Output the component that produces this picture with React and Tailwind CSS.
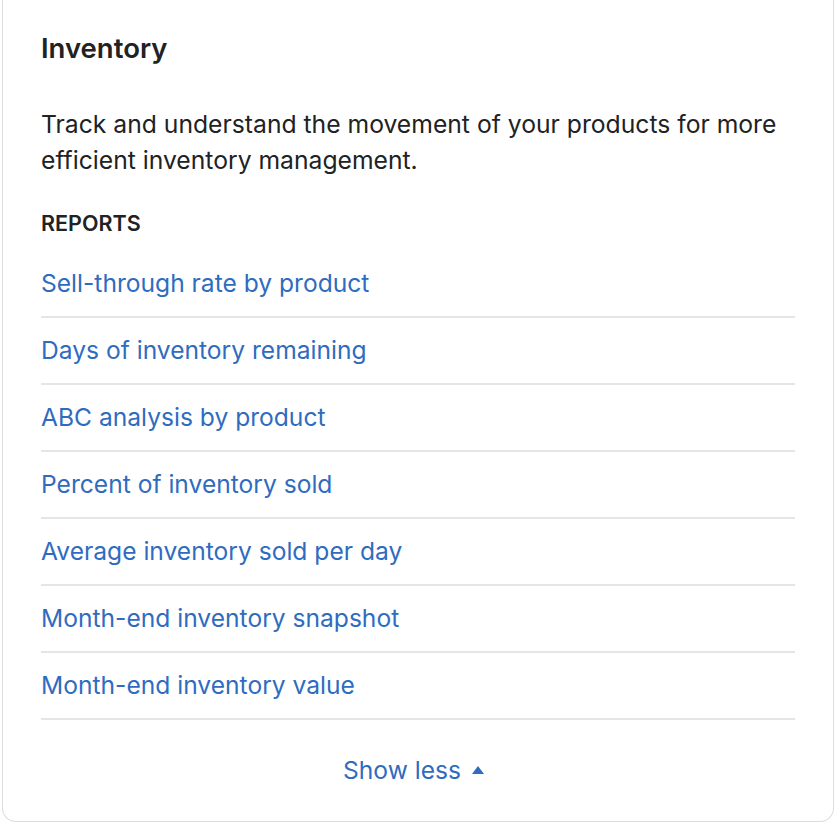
import React from "react";

const reports = [
  "Sell-through rate by product",
  "Days of inventory remaining",
  "ABC analysis by product",
  "Percent of inventory sold",
  "Average inventory sold per day",
  "Month-end inventory snapshot",
  "Month-end inventory value",
];

export default function App() {
  return (
    <div className="w-[840px] h-[824px] bg-white overflow-hidden" style={{ fontFamily: "Inter, 'Noto Sans', sans-serif" }}>
      <div className="ml-[2px] w-[832px] h-[822px] bg-white border-x border-b border-[#dcdcdc] rounded-b-[14px] px-[38px] pt-[30px]">
        <h2 className="text-[27.5px] leading-[36px] font-semibold text-[#202223]">Inventory</h2>
        <p className="mt-[40px] text-[24.7px] leading-[36px] text-[#202223]">
          Track and understand the movement of your products for more efficient inventory management.
        </p>
        <h3 className="mt-[31px] text-[21.5px] leading-[28px] font-semibold text-[#202223]">REPORTS</h3>
        <ul className="mt-[14px]">
          {reports.map((r) => (
            <li key={r} className="border-b-2 border-[#e4e5e7] h-[67px] flex items-center">
              <a href="#" className="text-[24.6px] text-[#2f6cc0]">{r}</a>
            </li>
          ))}
        </ul>
        <div className="flex justify-center items-center gap-[10px] mt-[32px] pr-[8px]">
          <span className="text-[24.6px] text-[#2f6cc0]">Show less</span>
          <svg width="14" height="10" viewBox="0 0 14 10"><path d="M7 1 L13 9 L1 9 Z" fill="#2f6cc0" /></svg>
        </div>
      </div>
    </div>
  );
}
